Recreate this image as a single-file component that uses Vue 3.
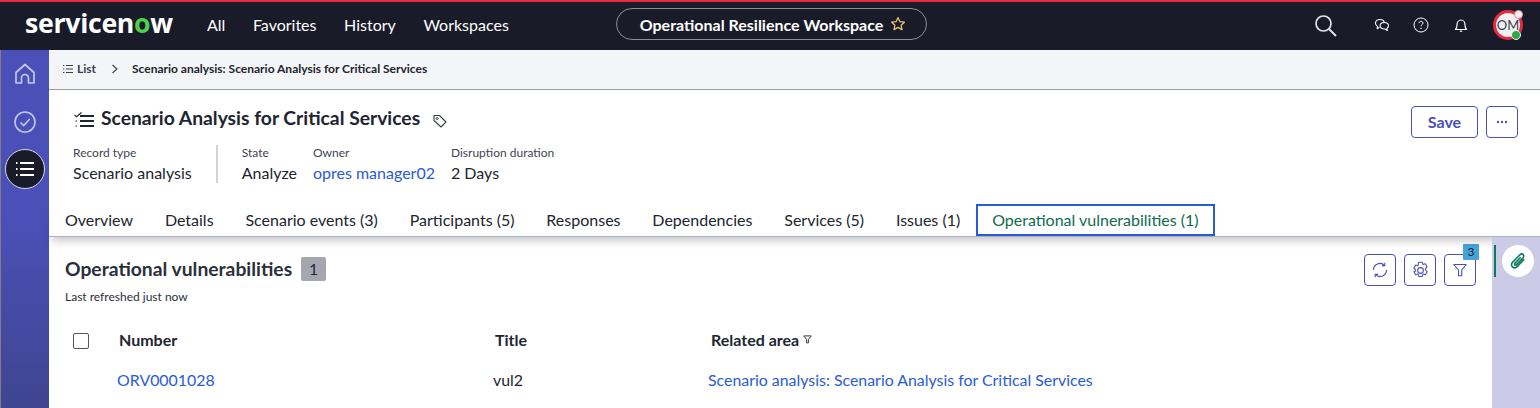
<template>
  <div class="page">
    <!-- Top navigation -->
    <header class="topbar">
      <div class="logo">servicen<span class="logo-o">o</span>w</div>
      <nav class="nav">
        <span v-for="item in navItems" :key="item">{{ item }}</span>
      </nav>
      <div class="workspace-pill">
        <span>Operational Resilience Workspace</span>
        <svg class="star" viewBox="0 0 16 16" width="16" height="16">
          <path d="M8 1.6l1.9 4.1 4.5.5-3.3 3 .9 4.4L8 11.4l-4 2.2.9-4.4-3.300-3 4.500-.5z" fill="none" stroke="#f0c674" stroke-width="1.2" stroke-linejoin="round" />
        </svg>
      </div>
      <div class="top-icons">
        <svg class="search" viewBox="0 0 24 24" width="24" height="24">
          <circle cx="10.5" cy="10.5" r="7.5" fill="none" stroke="#e4e4e8" stroke-width="1.7" />
          <path d="M16 16l7 7" stroke="#e4e4e8" stroke-width="1.9" />
        </svg>
        <svg class="chat" viewBox="0 0 16 16" width="16" height="16">
          <path d="M5.500 10.500l-.2-.1-2.100 1.300.3-2.300C2.400 8.700 1.500 7.600 1.500 6.200 1.500 4 3.500 2.500 6 2.500c2.200 0 3.900 1.200 4.300 2.900" fill="none" stroke="#fff" stroke-width="1.100" stroke-linejoin="round" />
          <path d="M10.200 5.500c2.400 0 4.300 1.400 4.300 3.200 0 1-.6 1.900-1.500 2.500l.3 2.300-2.300-1.500c-2.500.2-4.900-1-4.900-3.300 0-1.800 1.800-3.200 4.100-3.200z" fill="none" stroke="#fff" stroke-width="1.100" stroke-linejoin="round" />
        </svg>
        <svg class="help" viewBox="0 0 16 16" width="16" height="16">
          <circle cx="8" cy="8" r="7" fill="none" stroke="#fff" stroke-width="1" />
          <path d="M6 6.200c0-1.200.9-1.900 2-1.900s2 .7 2 1.800c0 1.500-2 1.500-2 3.200" fill="none" stroke="#fff" stroke-width="1" />
          <circle cx="8" cy="11.400" r=".7" fill="#fff" />
        </svg>
        <svg class="bell" viewBox="0 0 16 16" width="16" height="16">
          <path d="M2.500 12.500c1-1 1.500-1.800 1.500-4.500 0-3 1.800-5 4-5s4 2 4 5c0 2.700.5 3.500 1.500 4.500z" fill="none" stroke="#fff" stroke-width="1.200" stroke-linejoin="round" />
          <path d="M6.800 14.200h2.400" stroke="#fff" stroke-width="1.200" />
        </svg>
        <div class="avatar">
          OM
          <span class="avatar-gear"></span>
          <span class="avatar-status"></span>
        </div>
      </div>
    </header>

    <div class="body-row">
      <!-- Left rail -->
      <aside class="rail">
        <svg viewBox="0 0 24 24" width="24" height="24">
          <path d="M3 21v-10.500l9-8 9 8V21h-5.500v-5a3.500 3.500 0 0 0-7 0v5z" fill="none" stroke="#c4c6e8" stroke-width="1.700" stroke-linejoin="round" />
        </svg>
        <svg class="rail-check" viewBox="0 0 24 24" width="24" height="24">
          <circle cx="12" cy="12" r="10" fill="none" stroke="#c4c6e8" stroke-width="1.600" />
          <path d="M7.500 12.500l3.200 3 6-6.500" fill="none" stroke="#c4c6e8" stroke-width="1.600" />
        </svg>
        <div class="rail-active">
          <svg viewBox="0 0 20 16" width="20" height="16">
            <path d="M5 2h14M5 8h14M5 14h14" stroke="#fff" stroke-width="1.800" />
            <path d="M1 2h1.500M1 8h1.500M1 14h1.500" stroke="#fff" stroke-width="1.800" />
          </svg>
        </div>
      </aside>

      <main class="main">
        <div class="breadcrumb">
          <svg viewBox="0 0 10 10" width="10" height="10">
            <path d="M3 1.500h7M3 5h7M3 8.500h7M0 1.500h1.400M0 5h1.400M0 8.500h1.400" stroke="#3a3f4b" stroke-width="1" />
          </svg>
          <span class="crumb-list">List</span>
          <svg class="crumb-sep" viewBox="0 0 8 10" width="8" height="10">
            <path d="M1.500 1l4.500 4-4.500 4" fill="none" stroke="#3a3f4b" stroke-width="1.100" />
          </svg>
          <span class="crumb-current">Scenario analysis: Scenario Analysis for Critical Services</span>
        </div>

        <section class="record-head">
          <div class="title-row">
            <svg class="title-icon" viewBox="0 0 20 15" width="20" height="15">
              <path d="M6 4h14M6 9h14M6 14h14" stroke="#20252f" stroke-width="2" />
              <path d="M.5 2.800l2 2L7.500.5" fill="none" stroke="#20252f" stroke-width="1.200" />
              <path d="M1.500 9h1.500M1.500 14h1.500" stroke="#20252f" stroke-width="1.200" />
            </svg>
            <h1>Scenario Analysis for Critical Services</h1>
            <svg class="tag" viewBox="0 0 16 16" width="16" height="16">
              <path d="M2 2.500h5.500l6.500 6.500-5 5-7-6.500z" fill="none" stroke="#3a3f4b" stroke-width="1.100" stroke-linejoin="round" />
              <circle cx="5.200" cy="5.500" r="1" fill="none" stroke="#3a3f4b" stroke-width="1" />
            </svg>
            <div class="actions">
              <button class="save">Save</button>
              <button class="more">
                <svg viewBox="0 0 12 4" width="12" height="4">
                  <circle cx="2" cy="2" r="1.200" fill="#4a50b8" />
                  <circle cx="6" cy="2" r="1.200" fill="#4a50b8" />
                  <circle cx="10" cy="2" r="1.200" fill="#4a50b8" />
                </svg>
              </button>
            </div>
          </div>
          <div class="meta-row">
            <div class="meta meta-type">
              <span class="meta-label">Record type</span>
              <span class="meta-value">Scenario analysis</span>
            </div>
            <div class="meta meta-state">
              <span class="meta-label">State</span>
              <span class="meta-value">Analyze</span>
            </div>
            <div class="meta meta-owner">
              <span class="meta-label">Owner</span>
              <span class="meta-value link">opres manager02</span>
            </div>
            <div class="meta">
              <span class="meta-label">Disruption duration</span>
              <span class="meta-value">2 Days</span>
            </div>
          </div>
        </section>

        <div class="tabs">
          <span
            v-for="tab in tabs"
            :key="tab"
            class="tab"
            :class="{ active: tab === activeTab }"
          >{{ tab }}</span>
        </div>

        <div class="content-row">
          <section class="list-section">
            <div class="list-head">
              <div>
                <div class="list-title">
                  <h2>Operational vulnerabilities</h2>
                  <span class="count">1</span>
                </div>
                <div class="refreshed">Last refreshed just now</div>
              </div>
              <div class="list-actions">
                <button class="icon-btn">
                  <svg viewBox="0 0 16 16" width="16" height="16">
                    <path d="M1.500 8a6.500 6.500 0 0 1 11-4.700M14.500 8a6.500 6.500 0 0 1-11 4.700" fill="none" stroke="#4a50b8" stroke-width="1.100" />
                    <path d="M12.800 .8v2.800h-2.800M3.200 15.200v-2.800h2.800" fill="none" stroke="#4a50b8" stroke-width="1.100" />
                  </svg>
                </button>
                <button class="icon-btn">
                  <svg viewBox="0 0 16 16" width="19" height="19">
                    <path d="M6.500 1h3l.6 2 2-.6 1.500 2.600-1.500 1.500v1l1.500 1.500-1.500 2.600-2-.6-.6 2h-3l-.6-2-2 .6-1.500-2.600L3.900 8.500v-1L2.400 6l1.500-2.600 2 .6z" fill="none" stroke="#4a50b8" stroke-width=".9" stroke-linejoin="round" />
                    <circle cx="8" cy="8" r="2.400" fill="none" stroke="#4a50b8" stroke-width=".9" />
                  </svg>
                </button>
                <button class="icon-btn filter-btn">
                  <svg viewBox="0 0 16 16" width="16" height="16">
                    <path d="M1.800 2.500h12.400L9.700 8v5.800H6.500V8z" fill="none" stroke="#4a50b8" stroke-width="1.100" stroke-linejoin="round" />
                  </svg>
                  <span class="filter-badge">3</span>
                </button>
              </div>
            </div>

            <div class="table">
              <div class="table-row table-header">
                <span class="checkbox"></span>
                <span>Number</span>
                <span>Title</span>
                <span class="with-filter">
                  Related area
                  <svg viewBox="0 0 10 10" width="9" height="9">
                    <path d="M.8 1h8.400L6 5v3.800H4V5z" fill="none" stroke="#20252f" stroke-width="1" />
                  </svg>
                </span>
              </div>
              <div class="table-row table-data">
                <span></span>
                <span class="link">ORV0001028</span>
                <span>vul2</span>
                <span class="link">Scenario analysis: Scenario Analysis for Critical Services</span>
              </div>
            </div>
          </section>

          <aside class="side">
            <span class="side-mark"></span>
            <div class="clip">
              <svg viewBox="0 0 16 16" width="18" height="18">
                <path d="M13.500 6.500l-6 6.300c-1.400 1.400-3.300 1.500-4.400.4-1.100-1.100-1-3 .4-4.400l6-6.200c1-1 2.300-1.100 3.100-.3.800.8.700 2.100-.3 3.100l-5.600 5.800c-.5.500-1.100.6-1.500.2-.4-.4-.3-1 .2-1.500l5-5.200" fill="none" stroke="#0b7a5c" stroke-width="1.400" />
              </svg>
            </div>
          </aside>
        </div>
      </main>
    </div>
  </div>
</template>

<script setup>
const navItems = ['All', 'Favorites', 'History', 'Workspaces']

const tabs = [
  'Overview',
  'Details',
  'Scenario events (3)',
  'Participants (5)',
  'Responses',
  'Dependencies',
  'Services (5)',
  'Issues (1)',
  'Operational vulnerabilities (1)',
]
const activeTab = 'Operational vulnerabilities (1)'
</script>

<style>
html,
body {
  margin: 0;
  overflow: hidden;
}
</style>

<style scoped>
.page {
  width: 1540px;
  height: 408px;
  overflow: hidden;
  display: flex;
  flex-direction: column;
  font-family: Lato, "Open Sans", sans-serif;
  color: #20252f;
  background: #fff;
}

.topbar {
  height: 48px;
  flex: none;
  display: flex;
  align-items: center;
  position: relative;
  background: #1a1b29;
  border-top: 2px solid #e8293f;
  color: #fff;
}

.logo {
  margin-left: 25px;
  width: 160px;
  font-family: "Open Sans", sans-serif;
  font-size: 26.700px;
  font-weight: 700;
  letter-spacing: -0.3px;
  line-height: 1;
  margin-top: -6px;
}
.logo-o {
  position: relative;
  color: #4fd14b;
}
/* notch at the bottom of the green ring */
.logo-o::after {
  content: "";
  position: absolute;
  left: 50%;
  bottom: 3px;
  width: 4px;
  height: 5px;
  margin-left: -2px;
  background: #1a1b29;
}

.nav {
  display: flex;
  gap: 27.600px;
  margin-left: 22px;
  font-size: 16px;
  margin-top: -4px;
}

.workspace-pill {
  position: absolute;
  left: 616px;
  top: 6px;
  width: 311px;
  height: 32px;
  box-sizing: border-box;
  border: 1px solid #8b8c97;
  border-radius: 16px;
  display: flex;
  align-items: center;
  justify-content: center;
  gap: 7px;
  padding-left: 3px;
  font-size: 16px;
  font-weight: 700;
}

.top-icons {
  margin-left: auto;
  display: flex;
  align-items: center;
  margin-top: -2px;
  padding-right: 16px;
}
.search { margin-right: 37px; }
.chat { margin-right: 23px; }
.help { margin-right: 24px; }
.bell { margin-right: 25px; }

.avatar {
  position: relative;
  width: 30px;
  height: 30px;
  margin-left: -1px;
  margin-right: 1px;
  box-sizing: border-box;
  border: 3.500px solid #e8293f;
  border-radius: 50%;
  background: #f1f1f3;
  color: #3a3f4b;
  font-size: 13px;
  display: flex;
  align-items: center;
  justify-content: center;
}
.avatar-gear {
  position: absolute;
  top: -3px;
  right: -3px;
  width: 7px;
  height: 7px;
  border: 1px solid #e58c96;
  border-radius: 50%;
  background: #f1f1f3;
}
.avatar-status {
  position: absolute;
  right: -1px;
  bottom: -3px;
  width: 8px;
  height: 8px;
  border-radius: 50%;
  background: #2fa84a;
  border: 1px solid #f1f1f3;
}

.body-row {
  flex: 1;
  display: flex;
  min-height: 0;
}

.rail {
  flex: none;
  display: flex;
  flex-direction: column;
  align-items: center;
  padding-top: 12px;
  box-sizing: border-box;
  border-left: 1px solid #7d7e86;
  width: 49px;
  background: linear-gradient(to bottom, #4b50b9 0%, #4b50b9 45%, #3f4590 100%);
}
.rail-check { margin-top: 24px; }
.rail-active {
  margin-top: 15px;
  width: 38px;
  height: 38px;
  border-radius: 50%;
  background: #1a1b29;
  border: 1px solid #d8d8e6;
  display: flex;
  align-items: center;
  justify-content: center;
}

.main {
  flex: 1;
  min-width: 0;
  display: flex;
  flex-direction: column;
}

.breadcrumb {
  height: 37px;
  padding-bottom: 2px;
  flex: none;
  display: flex;
  align-items: center;
  padding-left: 14px;
  background: #f4f5f7;
  border-bottom: 1px solid #9a9da6;
  font-size: 12px;
}
.crumb-list {
  margin-left: 4px;
  font-weight: 700;
  color: #3a3f4b;
}
.crumb-sep { margin: 0 13px 0 15px; }
.crumb-current { font-weight: 700; }

.record-head {
  flex: none;
  padding: 13px 22px 0 24px;
}
.title-row {
  display: flex;
  align-items: center;
  height: 30px;
}
.title-icon { margin-left: 1px; margin-top: 2px; }
h1 {
  margin: 0 0 0 7px;
  font-size: 19.300px;
  font-weight: 700;
  line-height: 30px;
}
.tag { margin-left: 12px; margin-top: 5px; }
.actions {
  margin-left: auto;
  margin-top: 7px;
  display: flex;
  gap: 8px;
}
button {
  font-family: inherit;
  background: #fff;
  border: 1px solid #4a50b8;
  border-radius: 4px;
  padding: 0;
  display: flex;
  align-items: center;
  justify-content: center;
  color: #4a50b8;
}
.save {
  width: 67px;
  height: 32px;
  font-size: 16px;
  font-weight: 700;
}
.more {
  width: 32px;
  height: 32px;
}

.meta-row {
  display: flex;
  margin-top: 12px;
  height: 38px;
}
.meta {
  display: flex;
  flex-direction: column;
}
.meta-label {
  font-size: 12px;
  line-height: 15px;
  color: #3f4652;
}
.meta-value {
  margin-top: 3px;
  font-size: 16px;
  line-height: 19px;
}
.meta-type {
  padding-right: 24px;
  border-right: 2px solid #cfd3da;
  margin-right: 24px;
}
.meta-state { margin-right: 16px; }
.meta-owner { margin-right: 16px; }

.link { color: #2a5bd7; }

.tabs {
  flex: none;
  display: flex;
  height: 32px;
  margin-top: 21px;
  border-bottom: 1px solid #a9b0c4;
  box-shadow: 0 7px 9px -3px rgba(0, 0, 0, 0.22);
  position: relative;
  z-index: 1;
}
.tab {
  padding: 0 15.930px;
  font-size: 16px;
  line-height: 32px;
  height: 32px;
  box-sizing: border-box;
  white-space: nowrap;
}
.tab.active {
  color: #0e6b50;
  border: 2px solid #2a5bd7;
  line-height: 28px;
  padding: 0 14px;
}

.content-row {
  flex: 1;
  display: flex;
  min-height: 0;
}

.list-section {
  flex: 1;
  min-width: 0;
  padding: 0 16px;
}
.list-head {
  display: flex;
  justify-content: space-between;
  padding-top: 20px;
}
.list-title {
  display: flex;
  align-items: center;
  gap: 9px;
}
h2 {
  margin: 0;
  font-size: 19.300px;
  font-weight: 700;
  line-height: 24px;
  color: #2a303b;
}
.count {
  width: 25px;
  height: 24px;
  border-radius: 2px;
  background: #a5a6b0;
  font-size: 15px;
  display: flex;
  align-items: center;
  justify-content: center;
}
.refreshed {
  margin-top: 9px;
  font-size: 12px;
  line-height: 14px;
  color: #2a303b;
}
.list-actions {
  display: flex;
  gap: 8px;
  margin-top: -3px;
  height: 32px;
}
.icon-btn {
  position: relative;
  width: 32px;
  height: 32px;
}
.filter-badge {
  position: absolute;
  top: -11px;
  right: -4px;
  width: 16px;
  height: 16px;
  border-radius: 1px;
  background: #46a3d9;
  color: #20252f;
  font-size: 12px;
  line-height: 16px;
  text-align: center;
}

.table-row {
  display: grid;
  grid-template-columns: 46px 376px 215px 1fr;
  align-items: center;
}
.table-header {
  margin-top: 25px;
  padding-left: 8px;
  font-size: 16px;
  font-weight: 700;
  height: 20px;
  grid-template-columns: 46px 376px 216px 1fr;
}
.with-filter {
  display: flex;
  align-items: center;
  gap: 4px;
}
.checkbox {
  width: 14px;
  height: 14px;
  margin-top: 4px;
  border: 1px solid #50555f;
  border-radius: 2px;
  background: #fff;
}
.table-data {
  margin-top: 20px;
  font-size: 15.900px;
  height: 20px;
  padding-left: 6px;
}

.side {
  position: relative;
  z-index: 2;
  width: 48px;
  flex: none;
  background: #cbcbe8;
}
.side-mark {
  position: absolute;
  left: 2px;
  top: 8px;
  width: 2px;
  height: 32px;
  background: #0b7a5c;
}
.clip {
  position: absolute;
  left: 10px;
  top: 8px;
  width: 32px;
  height: 32px;
  border-radius: 50%;
  background: #fff;
  display: flex;
  align-items: center;
  justify-content: center;
}
</style>
